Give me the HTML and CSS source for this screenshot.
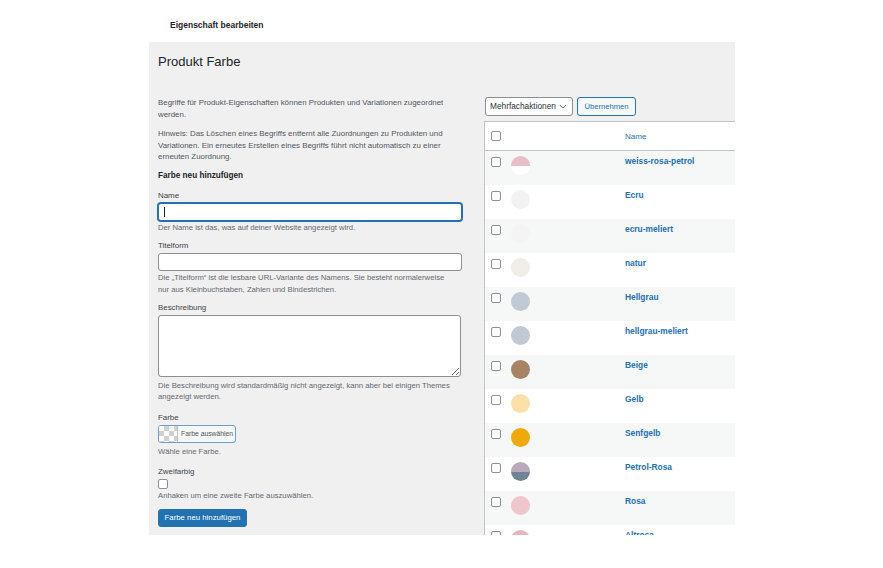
FILE: index.html
```html
<!DOCTYPE html>
<html lang="de">
<head>
<meta charset="utf-8">
<title>Produkt Farbe</title>
<link rel="stylesheet" href="styles.css">
</head>
<body>
<header class="topbar"><span class="topbar-title">Eigenschaft bearbeiten</span></header>
<main class="panel">
  <h1 class="page-title">Produkt Farbe</h1>
  <div class="cols">
    <section class="left">
      <p class="intro">Begriffe für Produkt-Eigenschaften können Produkten und Variationen zugeordnet<br>werden.</p>
      <p class="intro note">Hinweis: Das Löschen eines Begriffs entfernt alle Zuordnungen zu Produkten und<br>Variationen. Ein erneutes Erstellen eines Begriffs führt nicht automatisch zu einer<br>erneuten Zuordnung.</p>
      <h2 class="form-title">Farbe neu hinzufügen</h2>

      <div class="field first">
        <label class="label">Name</label>
        <div class="input focused"><span class="caret"></span></div>
        <p class="help">Der Name ist das, was auf deiner Website angezeigt wird.</p>
      </div>

      <div class="field">
        <label class="label">Titelform</label>
        <div class="input"></div>
        <p class="help">Die „Titelform“ ist die lesbare URL-Variante des Namens. Sie besteht normalerweise<br>nur aus Kleinbuchstaben, Zahlen und Bindestrichen.</p>
      </div>

      <div class="field">
        <label class="label">Beschreibung</label>
        <textarea class="textarea"></textarea>
        <p class="help tight">Die Beschreibung wird standardmäßig nicht angezeigt, kann aber bei einigen Themes<br>angezeigt werden.</p>
      </div>

      <div class="field wide">
        <label class="label">Farbe</label>
        <div class="color-btn"><span class="checker"></span><span class="color-text">Farbe auswählen</span></div>
        <p class="help gap">Wähle eine Farbe.</p>
      </div>

      <div class="field wide2">
        <label class="label">Zweifarbig</label>
        <span class="checkbox"></span>
        <p class="help">Anhaken um eine zweite Farbe auszuwählen.</p>
      </div>

      <button class="primary">Farbe neu hinzufügen</button>
    </section>

    <section class="right">
      <div class="toolbar">
        <div class="select">Mehrfachaktionen
          <svg class="chev" viewBox="0 0 10 6" width="8" height="5"><path d="M1 1l4 4 4-4" fill="none" stroke="#50575e" stroke-width="1.2"/></svg>
        </div>
        <button class="secondary">Übernehmen</button>
      </div>
      <div class="table">
        <div class="thead">
          <span class="checkbox"></span>
          <span></span>
          <span class="th-name">Name</span>
        </div>
        <div class="row"><span class="checkbox"></span><span class="swatch" style="background:linear-gradient(#e8bfc7 50%, #ffffff 50%)"></span><span class="name">weiss-rosa-petrol</span></div>
        <div class="row"><span class="checkbox"></span><span class="swatch" style="background:#f2f2f2"></span><span class="name">Ecru</span></div>
        <div class="row"><span class="checkbox"></span><span class="swatch" style="background:#f4f4f4"></span><span class="name">ecru-meliert</span></div>
        <div class="row"><span class="checkbox"></span><span class="swatch" style="background:#f2eee7"></span><span class="name">natur</span></div>
        <div class="row"><span class="checkbox"></span><span class="swatch" style="background:#c1c9d5"></span><span class="name">Hellgrau</span></div>
        <div class="row"><span class="checkbox"></span><span class="swatch" style="background:#c1c9d5"></span><span class="name">hellgrau-meliert</span></div>
        <div class="row"><span class="checkbox"></span><span class="swatch" style="background:#a88467"></span><span class="name">Beige</span></div>
        <div class="row"><span class="checkbox"></span><span class="swatch" style="background:#fbe0a7"></span><span class="name">Gelb</span></div>
        <div class="row"><span class="checkbox"></span><span class="swatch" style="background:#efa90d"></span><span class="name">Senfgelb</span></div>
        <div class="row"><span class="checkbox"></span><span class="swatch" style="background:linear-gradient(#baa9ba 50%, #6e8494 50%)"></span><span class="name">Petrol-Rosa</span></div>
        <div class="row"><span class="checkbox"></span><span class="swatch" style="background:#efc6cc"></span><span class="name">Rosa</span></div>
        <div class="row"><span class="checkbox"></span><span class="swatch" style="background:#e8b4be"></span><span class="name">Altrosa</span></div>
      </div>
    </section>
  </div>
</main>
</body>
</html>
```

FILE: styles.css
```css
* { box-sizing: border-box; }

html, body {
  margin: 0;
  background: #ffffff;
  font-family: "Liberation Sans", Arial, sans-serif;
  color: #1d2327;
}

.topbar {
  height: 42px;
  padding-left: 170px;
  padding-top: 14px;
}
.topbar-title {
  font-size: 8.5px;
  font-weight: bold;
  line-height: 12px;
  color: #1d2327;
}

.panel {
  margin-left: 149px;
  width: 586px;
  height: 493px;
  background: #f0f0f1;
  overflow: hidden;
  padding: 0 0 0 9px;
}

.page-title {
  margin: 0;
  padding-top: 12px;
  font-size: 13px;
  line-height: 16px;
  font-weight: normal;
  color: #1d2327;
}

.cols {
  display: flex;
  gap: 22px;
  margin-top: 27px;
}

.left {
  width: 304px;
  flex: none;
}

.intro {
  margin: 0;
  font-size: 7.9px;
  line-height: 12px;
  color: #50575e;
  white-space: nowrap;
}
.intro.note {
  margin-top: 7px;
  line-height: 11.6px;
}

.form-title {
  margin: 7px 0 0;
  font-size: 8.2px;
  line-height: 12px;
  font-weight: bold;
  color: #1d2327;
}

.field { margin-top: 6px; }
.field.first { margin-top: 8px; }
.field.wide { margin-top: 9px; }
.field.wide2 { margin-top: 8px; }

.label {
  display: block;
  font-size: 7.9px;
  line-height: 12px;
  font-weight: normal;
  color: #3c434a;
}

.input {
  margin-top: 1px;
  width: 304px;
  height: 18px;
  background: #fff;
  border: 1px solid #8c8f94;
  border-radius: 3px;
  display: flex;
  align-items: center;
  padding-left: 5px;
}
.input.focused {
  border-color: #2271b1;
  box-shadow: 0 0 0 1px #2271b1;
}
.caret {
  width: 1px;
  height: 10px;
  background: #1d2327;
}

.textarea {
  display: block;
  margin: 1px 0 0;
  width: 303px;
  height: 62px;
  background: #fff;
  border: 1px solid #8c8f94;
  border-radius: 3px;
  resize: both;
  font: inherit;
}

.help {
  margin: 1px 0 0;
  font-size: 7.7px;
  line-height: 12px;
  color: #646970;
  white-space: nowrap;
}
.help.tight { margin-top: 3px; line-height: 11.5px; }
.help.gap { margin-top: 3px; }

.color-btn {
  margin-top: 1px;
  width: 78px;
  height: 18px;
  display: flex;
  border: 1px solid #6f9fcf;
  border-radius: 3px;
  background: #f6f7f7;
  overflow: hidden;
}
.checker {
  width: 19px;
  height: 100%;
  border-right: 1px solid #c3c4c7;
  background-color: #fff;
  background-image:
    linear-gradient(45deg, #cfd0d2 25%, transparent 25%, transparent 75%, #cfd0d2 75%),
    linear-gradient(45deg, #cfd0d2 25%, transparent 25%, transparent 75%, #cfd0d2 75%);
  background-size: 10px 10px;
  background-position: 0 0, 5px 5px;
}
.color-text {
  font-size: 6.8px;
  line-height: 16px;
  padding-left: 3px;
  color: #50575e;
  white-space: nowrap;
}

.checkbox {
  display: block;
  width: 10px;
  height: 10px;
  border: 1px solid #8c8f94;
  border-radius: 2px;
  background: #fff;
}
.field .checkbox { margin-top: 1px; }

.primary {
  margin-top: 7px;
  display: block;
  width: 89px;
  height: 18px;
  padding: 0;
  border: 1px solid #2271b1;
  border-radius: 3px;
  background: #2271b1;
  color: #fff;
  font-family: inherit;
  font-size: 7.8px;
  white-space: nowrap;
}

.right {
  flex: 1;
  min-width: 0;
  overflow: hidden;
}

.toolbar {
  display: flex;
  gap: 4px;
  height: 19px;
  padding-left: 1px;
}
.select {
  width: 88px;
  height: 19px;
  border: 1px solid #8c8f94;
  border-radius: 3px;
  background: #fff;
  font-size: 8.3px;
  line-height: 17px;
  padding-left: 4px;
  color: #2c3338;
  display: flex;
  align-items: center;
  gap: 3px;
  white-space: nowrap;
}
.chev { flex: none; }
.secondary {
  width: 59px;
  height: 19px;
  padding: 0;
  border: 1px solid #2271b1;
  border-radius: 3px;
  background: #f6f7f7;
  color: #2271b1;
  font-family: inherit;
  font-size: 7.6px;
  white-space: nowrap;
}

.table {
  margin-top: 5px;
  width: 400px;
  background: #fff;
  border-top: 1px solid #c3c4c7;
  border-left: 1px solid #c3c4c7;
}

.thead, .row {
  display: grid;
  grid-template-columns: 20px 114px 1fr;
  padding-left: 6px;
}
.thead {
  height: 29px;
  align-items: center;
  border-bottom: 1px solid #c3c4c7;
}
.th-name {
  font-size: 8.1px;
  color: #2271b1;
}

.row {
  height: 34px;
  align-items: start;
}
.row:nth-child(even) { background: #f6f7f7; }
.row .checkbox { margin-top: 6px; }
.swatch {
  margin-top: 5px;
  width: 19px;
  height: 19px;
  border-radius: 50%;
}
.name {
  margin-top: 4px;
  font-size: 8.4px;
  line-height: 12px;
  font-weight: bold;
  color: #2271b1;
}
```
